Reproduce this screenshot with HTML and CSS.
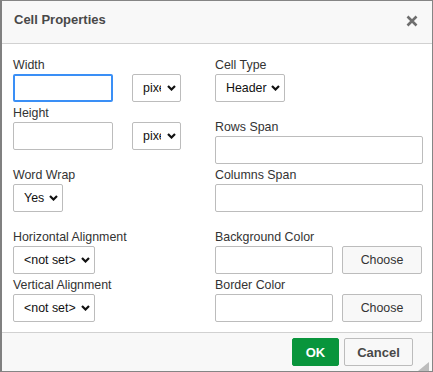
FILE: index.html
```html
<!DOCTYPE html>
<html>
<head>
<meta charset="utf-8">
<title>Cell Properties</title>
<link rel="stylesheet" href="styles.css">
</head>
<body>
<div class="dialog">
  <div class="dlg-header">
    <span class="dlg-title">Cell Properties</span>
    <svg class="dlg-close" width="12" height="12" viewBox="0 0 12 12"><path d="M1.5 1.5 L10.5 10.5 M10.5 1.5 L1.5 10.5" stroke="#6e6e6e" stroke-width="2.6" fill="none"/></svg>
  </div>
  <div class="dlg-body">
    <div class="col">
      <div class="field">
        <label class="lbl">Width</label>
        <div class="pair">
          <input class="txt txt-focus w-100" type="text">
          <select class="sel sel-clip w-49"><option>pixels</option></select>
        </div>
      </div>
      <div class="field sp-sm">
        <label class="lbl">Height</label>
        <div class="pair">
          <input class="txt w-100" type="text">
          <select class="sel sel-clip w-49"><option>pixels</option></select>
        </div>
      </div>
      <div class="field sp-lg">
        <label class="lbl">Word Wrap</label>
        <select class="sel w-50"><option>Yes</option></select>
      </div>
      <div class="field sp-lg">
        <label class="lbl">Horizontal Alignment</label>
        <select class="sel w-82"><option>&lt;not set&gt;</option></select>
      </div>
      <div class="field sp-sm">
        <label class="lbl">Vertical Alignment</label>
        <select class="sel w-82"><option>&lt;not set&gt;</option></select>
      </div>
    </div>
    <div class="col">
      <div class="field">
        <label class="lbl">Cell Type</label>
        <select class="sel w-70"><option>Header</option></select>
      </div>
      <div class="field sp-lg">
        <label class="lbl">Rows Span</label>
        <input class="txt w-full" type="text">
      </div>
      <div class="field sp-sm">
        <label class="lbl">Columns Span</label>
        <input class="txt w-full" type="text">
      </div>
      <div class="field sp-lg">
        <label class="lbl">Background Color</label>
        <div class="pair pair-color">
          <input class="txt w-118" type="text">
          <button class="btn btn-choose">Choose</button>
        </div>
      </div>
      <div class="field sp-sm">
        <label class="lbl">Border Color</label>
        <div class="pair pair-color">
          <input class="txt w-118" type="text">
          <button class="btn btn-choose">Choose</button>
        </div>
      </div>
    </div>
  </div>
  <div class="dlg-footer">
    <button class="btn btn-ok">OK</button>
    <button class="btn btn-cancel">Cancel</button>
  </div>
  <svg class="grip" width="11" height="9" viewBox="0 0 11 9"><polygon points="11,0 11,9 0,9" fill="#bdbdbd"/></svg>
</div>
</body>
</html>
```
FILE: styles.css
```css
* { box-sizing: border-box; }
html, body { margin: 0; padding: 0; background: #fff; }
body { font-family: "Liberation Sans", Arial, sans-serif; }

.dialog {
  position: relative;
  width: 433px;
  height: 372px;
  border-top: 1px solid #858585;
  border-left: 2px solid #808080;
  border-right: 1px solid #858585;
  border-bottom: 1px solid #858585;
  display: flex;
  flex-direction: column;
  background: #fff;
}

.dlg-header {
  height: 43px;
  flex: none;
  background: #f8f8f8;
  border-bottom: 1px solid #d1d1d1;
  display: flex;
  justify-content: space-between;
  align-items: flex-start;
  padding: 11px 14px 0 12px;
}
.dlg-title {
  font-size: 13px;
  line-height: 16px;
  font-weight: bold;
  color: #484848;
}
.dlg-close { margin-top: 3px; }

.dlg-body {
  height: 288px;
  flex: none;
  display: grid;
  grid-template-columns: 202px 208px;
  padding: 14px 9px 0 11px;
}
.col { display: flex; flex-direction: column; }
.field { display: flex; flex-direction: column; align-items: flex-start; }
.sp-sm { margin-top: 4px; }
.sp-lg { margin-top: 18px; }

.lbl {
  font-size: 12.4px;
  line-height: 14px;
  height: 14px;
  margin-bottom: 2px;
  color: #333;
}

.pair { display: flex; gap: 19px; }
.pair-color { gap: 9px; }

.txt {
  height: 28px;
  border: 1px solid #bcbcbc;
  border-radius: 2px;
  background: #fff;
  padding: 0 6px;
  font: 12.4px "Liberation Sans", Arial, sans-serif;
  outline: none;
}
.txt-focus { border: 2px solid #3a8ff6; }

.sel {
  -webkit-appearance: none;
  appearance: none;
  height: 28px;
  border: 1px solid #bcbcbc;
  border-radius: 2px;
  background-color: #fff;
  background-image: url("data:image/svg+xml;utf8,<svg xmlns='http://www.w3.org/2000/svg' width='9' height='6' viewBox='0 0 9 6'><path d='M1 1 L4.5 4.5 L8 1' stroke='%23111' stroke-width='2.2' fill='none'/></svg>");
  background-repeat: no-repeat;
  background-position: right 4px center;
  padding: 0 14px 0 10px;
  font: 12.4px "Liberation Sans", Arial, sans-serif;
  color: #111;
  outline: none;
}
.sel-clip { padding-right: 19px; }

.w-100 { width: 100px; }
.w-49 { width: 49px; }
.w-50 { width: 50px; }
.w-70 { width: 70px; }
.w-82 { width: 82px; }
.w-118 { width: 118px; }
.w-full { width: 208px; }

.btn {
  height: 28px;
  border: 1px solid #bcbcbc;
  border-radius: 2px;
  background: #f8f8f8;
  font-family: "Liberation Sans", Arial, sans-serif;
  padding: 0;
  cursor: pointer;
}
.btn-choose {
  width: 80px;
  font-size: 12.4px;
  color: #333;
}

.dlg-footer {
  flex: 1;
  background: #f8f8f8;
  border-top: 1px solid #d1d1d1;
  display: flex;
  justify-content: flex-end;
  align-items: flex-start;
  gap: 5px;
  padding: 5px 19px 0 0;
}
.btn-ok {
  width: 47px;
  background: #09953c;
  border-color: #09953c;
  color: #fff;
  font-size: 13px;
  font-weight: bold;
}
.btn-cancel {
  width: 69px;
  color: #484848;
  font-size: 13px;
  font-weight: bold;
}

.grip {
  position: absolute;
  right: 3px;
  bottom: 0;
  display: block;
}
```
